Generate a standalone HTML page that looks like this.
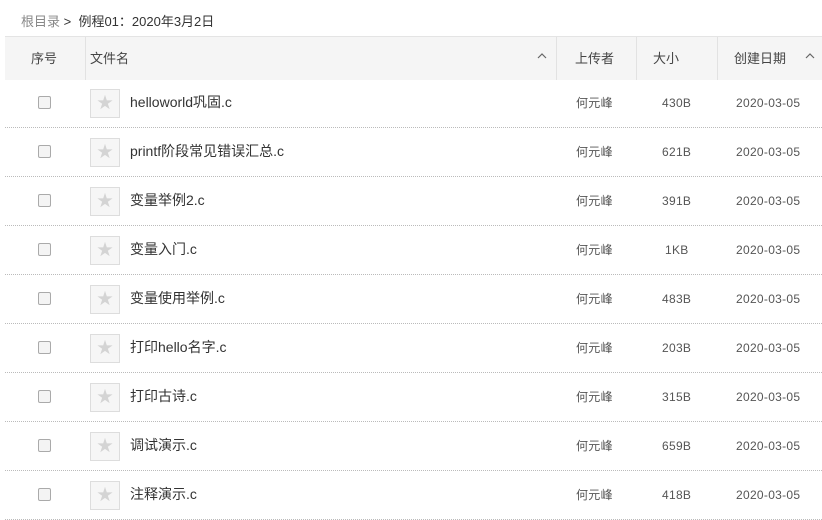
<!DOCTYPE html><html><head><meta charset="utf-8"><style>
body{margin:0;width:822px;height:517px;overflow:hidden;background:#fff;font-family:"Liberation Sans","Noto Sans CJK SC",sans-serif;color:#333;font-size:13px}
.bc{position:absolute;left:21px;top:11px;font-size:13px;color:#333}
.bc span{color:#888}
.hd{position:absolute;left:5px;top:36px;width:817px;height:43px;background:#f5f5f5;border-top:1px solid #e4e4e4}
.c{position:absolute;top:0;height:43px;line-height:43px;font-size:13px;color:#444}
.sep{position:absolute;top:0;width:1px;height:43px;background:#e2e2e2}
.row{position:absolute;left:5px;width:817px;height:48px;border-bottom:1px dotted #bbb}
.cb{position:absolute;left:33px;top:17px;width:11px;height:11px;border:1px solid #aaa;border-radius:2px;background:#f4f4f4}
.ic{position:absolute;left:85px;top:10px;width:28px;height:27px;border:1px solid #ddd;background:#f6f6f6;color:#d4d4d4;font-size:16px;text-align:center;line-height:27px}
.nm{position:absolute;left:125px;top:0;line-height:46px;font-size:14px;color:#333}
.t{position:absolute;top:0;line-height:49px;font-size:12px;color:#555;letter-spacing:0.3px}
.car{position:absolute;top:14px;width:10px;height:10px}
</style></head><body>
<div class="bc"><span>根目录</span> &gt;&nbsp; 例程01：2020年3月2日</div>
<div class="hd">
<div class="c" style="left:26px">序号</div>
<div class="sep" style="left:80px"></div>
<div class="c" style="left:85px">文件名</div>
<svg class="car" style="left:532px" viewBox="0 0 10 10"><path d="M1 7L5 3L9 7" fill="none" stroke="#666" stroke-width="1.2"/></svg>
<div class="sep" style="left:551px"></div>
<div class="c" style="left:570px">上传者</div>
<div class="sep" style="left:631px"></div>
<div class="c" style="left:648px">大小</div>
<div class="sep" style="left:712px"></div>
<div class="c" style="left:729px">创建日期</div>
<svg class="car" style="left:800px" viewBox="0 0 10 10"><path d="M1 7L5 3L9 7" fill="none" stroke="#666" stroke-width="1.2"/></svg>
</div>
<div id="rows"></div>
<script>
var d=[["helloworld巩固.c","430B"],["printf阶段常见错误汇总.c","621B"],["变量举例2.c","391B"],["变量入门.c","1KB"],["变量使用举例.c","483B"],["打印hello名字.c","203B"],["打印古诗.c","315B"],["调试演示.c","659B"],["注释演示.c","418B"]];
var h="";d.forEach(function(r,i){h+='<div class="row" style="top:'+(79+i*49)+'px"><div class="cb"></div><div class="ic">★</div><div class="nm">'+r[0]+'</div><div class="t" style="left:571px">何元峰</div><div class="t" style="left:'+(r[1]=="1KB"?660:657)+'px">'+r[1]+'</div><div class="t" style="left:731px">2020-03-05</div></div>'});
document.getElementById("rows").innerHTML=h;
</script>
</body></html>
